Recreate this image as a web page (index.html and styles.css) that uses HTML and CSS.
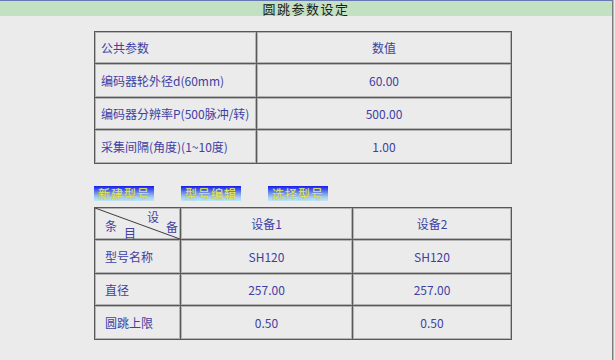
FILE: index.html
```html
<!DOCTYPE html>
<html lang="zh-CN">
<head>
<meta charset="utf-8">
<title>圆跳参数设定</title>
<link rel="stylesheet" href="styles.css">
</head>
<body>
<div class="window">
  <header class="titlebar">圆跳参数设定</header>
  <main class="content">
    <div class="grid common">
      <div class="cell left">公共参数</div>
      <div class="cell center">数值</div>
      <div class="cell left">编码器轮外径d(60mm)</div>
      <div class="cell center">60.00</div>
      <div class="cell left">编码器分辨率P(500脉冲/转)</div>
      <div class="cell center">500.00</div>
      <div class="cell left">采集间隔(角度)(1~10度)</div>
      <div class="cell center">1.00</div>
    </div>

    <div class="toolbar">
      <button class="btn">新建型号</button>
      <button class="btn">型号编辑</button>
      <button class="btn">选择型号</button>
    </div>

    <div class="grid devices">
      <div class="cell corner">
        <svg class="diag" viewBox="0 0 100 100" preserveAspectRatio="none"><line x1="0" y1="0" x2="100" y2="100" stroke="#404040" stroke-width="1" vector-effect="non-scaling-stroke"/></svg>
        <span class="ch c1">设</span><span class="ch c2">备</span>
        <span class="ch c3">条</span><span class="ch c4">目</span>
      </div>
      <div class="cell center">设备1</div>
      <div class="cell center">设备2</div>
      <div class="cell left wide">型号名称</div>
      <div class="cell center">SH120</div>
      <div class="cell center">SH120</div>
      <div class="cell left wide">直径</div>
      <div class="cell center">257.00</div>
      <div class="cell center">257.00</div>
      <div class="cell left wide">圆跳上限</div>
      <div class="cell center">0.50</div>
      <div class="cell center">0.50</div>
    </div>
  </main>
</div>
</body>
</html>
```

FILE: styles.css
```css
html, body {
  margin: 0;
  padding: 0;
  background: #ececec;
}

body {
  font-family: "Noto Sans CJK SC", "Noto Sans", sans-serif;
  font-size: 12px;
  color: #4040a4;
}

.window {
  width: 612px;
  height: 360px;
  border-right: 1px solid #7c7c7c;
  box-shadow: 1px 0 0 #b8b8b8;
  background: #ebebeb;
}

.titlebar {
  height: 15px;
  border-top: 1px solid #6878b4;
  background: #c2e0c2;
  color: #1c1c1c;
  font-size: 13px;
  line-height: 15px;
  text-align: center;
  letter-spacing: 1.5px;
}

.content {
  padding: 15px 0 0 94px;
}

/* bordered grid tables: dark rule lines with a lighter edge inside each cell */
.grid {
  display: grid;
  gap: 1px;
  padding: 1px;
  background: #585858;
  width: max-content;
}

.common {
  grid-template-columns: 161px 254px;
  grid-template-rows: 31px 33px 31px 33px;
}

.devices {
  grid-template-columns: 85px 171px 158px;
  grid-template-rows: 31px 33px 31px 33px;
  margin-top: 6px;
}

.cell {
  background: #ebebeb;
  box-shadow: inset 0 0 0 1px #b4b4b4;
  display: flex;
  align-items: center;
}

.left {
  padding-left: 6px;
}

.left.wide {
  padding-left: 10px;
}

.center {
  justify-content: center;
}

.toolbar {
  display: flex;
  gap: 27px;
  margin-top: 22px;
}

.btn {
  width: 60px;
  height: 15px;
  padding: 0;
  border: 0;
  font: inherit;
  font-size: 12px;
  line-height: 15px;
  color: #e2e45e;
  text-shadow: 0 0 1px #a0a468;
  letter-spacing: 1px;
  background: linear-gradient(to bottom, #1a1aee 0%, #3048f0 18%, #7898ea 50%, #a4cef2 75%, #bce8f8 100%);
  cursor: pointer;
}

.corner {
  position: relative;
}

.diag {
  position: absolute;
  left: 0;
  top: 0;
  width: 100%;
  height: 100%;
}

.ch {
  position: absolute;
  font-size: 12px;
  line-height: 12px;
}

.c1 { left: 52px; top: 3px; }
.c2 { left: 71px; top: 13px; }
.c3 { left: 10px; top: 12px; }
.c4 { left: 29px; top: 19px; }
```
